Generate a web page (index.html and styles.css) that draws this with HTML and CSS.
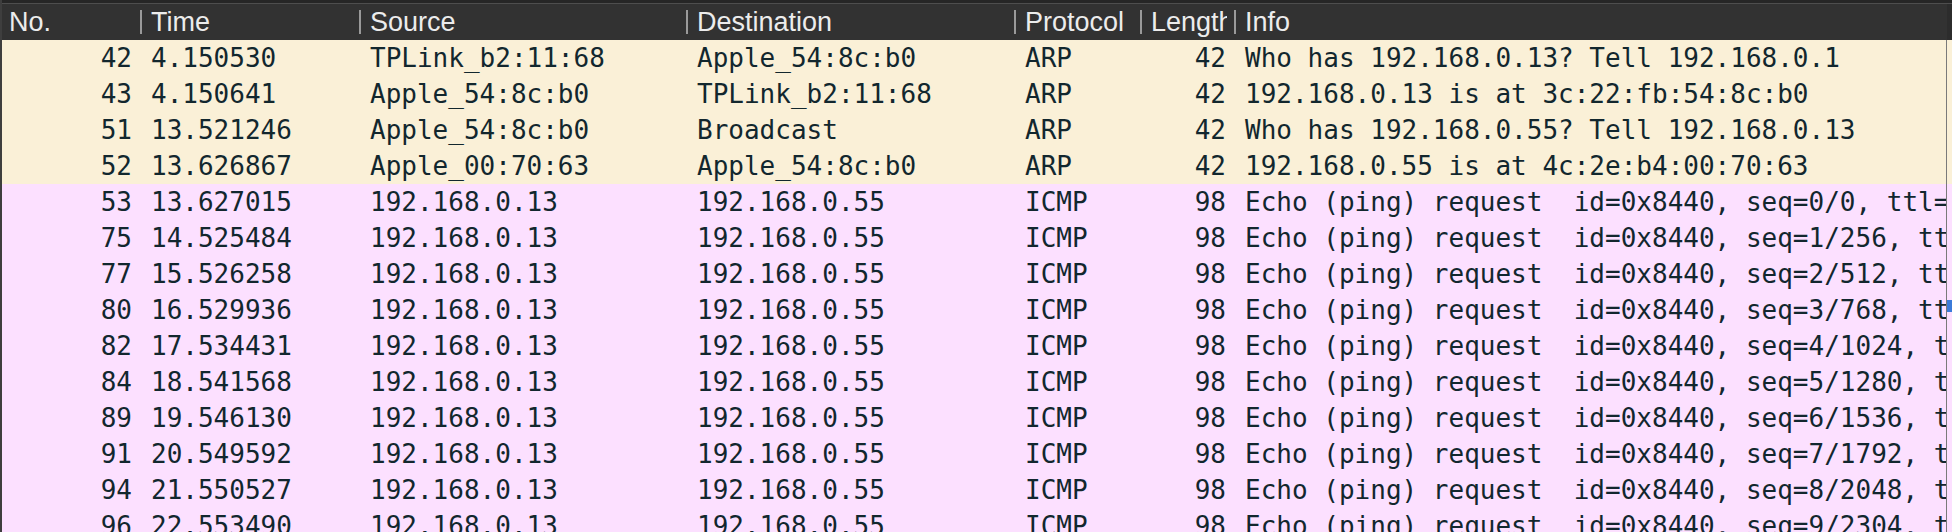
FILE: index.html
```html
<!DOCTYPE html>
<html>
<head>
<meta charset="utf-8">
<link rel="stylesheet" href="styles.css">
</head>
<body>
<div class="pane">
  <div class="topband"></div>
  <div class="row head">
    <div class="hcell first"><span class="lbl">No.</span></div>
    <div class="hcell"><span class="lbl">Time</span></div>
    <div class="hcell"><span class="lbl">Source</span></div>
    <div class="hcell"><span class="lbl">Destination</span></div>
    <div class="hcell"><span class="lbl">Protocol</span></div>
    <div class="hcell"><span class="lbl">Length</span></div>
    <div class="hcell info"><span class="lbl">Info</span></div>
    <div class="gutter"></div>
  </div>

  <div class="row arp"><div class="c num">42</div><div class="c">4.150530</div><div class="c">TPLink_b2:11:68</div><div class="c">Apple_54:8c:b0</div><div class="c">ARP</div><div class="c num">42</div><div class="c info">Who has 192.168.0.13? Tell 192.168.0.1</div><div class="gutter"></div></div>
  <div class="row arp"><div class="c num">43</div><div class="c">4.150641</div><div class="c">Apple_54:8c:b0</div><div class="c">TPLink_b2:11:68</div><div class="c">ARP</div><div class="c num">42</div><div class="c info">192.168.0.13 is at 3c:22:fb:54:8c:b0</div><div class="gutter"></div></div>
  <div class="row arp"><div class="c num">51</div><div class="c">13.521246</div><div class="c">Apple_54:8c:b0</div><div class="c">Broadcast</div><div class="c">ARP</div><div class="c num">42</div><div class="c info">Who has 192.168.0.55? Tell 192.168.0.13</div><div class="gutter"></div></div>
  <div class="row arp"><div class="c num">52</div><div class="c">13.626867</div><div class="c">Apple_00:70:63</div><div class="c">Apple_54:8c:b0</div><div class="c">ARP</div><div class="c num">42</div><div class="c info">192.168.0.55 is at 4c:2e:b4:00:70:63</div><div class="gutter"></div></div>

  <div class="row icmp"><div class="c num">53</div><div class="c">13.627015</div><div class="c">192.168.0.13</div><div class="c">192.168.0.55</div><div class="c">ICMP</div><div class="c num">98</div><div class="c info">Echo (ping) request  id=0x8440, seq=0/0, ttl=64 (reply in 54)</div><div class="gutter"></div></div>
  <div class="row icmp"><div class="c num">75</div><div class="c">14.525484</div><div class="c">192.168.0.13</div><div class="c">192.168.0.55</div><div class="c">ICMP</div><div class="c num">98</div><div class="c info">Echo (ping) request  id=0x8440, seq=1/256, ttl=64 (reply in 76)</div><div class="gutter"></div></div>
  <div class="row icmp"><div class="c num">77</div><div class="c">15.526258</div><div class="c">192.168.0.13</div><div class="c">192.168.0.55</div><div class="c">ICMP</div><div class="c num">98</div><div class="c info">Echo (ping) request  id=0x8440, seq=2/512, ttl=64 (reply in 78)</div><div class="gutter"></div></div>
  <div class="row icmp"><div class="c num">80</div><div class="c">16.529936</div><div class="c">192.168.0.13</div><div class="c">192.168.0.55</div><div class="c">ICMP</div><div class="c num">98</div><div class="c info">Echo (ping) request  id=0x8440, seq=3/768, ttl=64 (reply in 81)</div><div class="gutter mark"></div></div>
  <div class="row icmp"><div class="c num">82</div><div class="c">17.534431</div><div class="c">192.168.0.13</div><div class="c">192.168.0.55</div><div class="c">ICMP</div><div class="c num">98</div><div class="c info">Echo (ping) request  id=0x8440, seq=4/1024, ttl=64 (reply in 83)</div><div class="gutter"></div></div>
  <div class="row icmp"><div class="c num">84</div><div class="c">18.541568</div><div class="c">192.168.0.13</div><div class="c">192.168.0.55</div><div class="c">ICMP</div><div class="c num">98</div><div class="c info">Echo (ping) request  id=0x8440, seq=5/1280, ttl=64 (reply in 85)</div><div class="gutter"></div></div>
  <div class="row icmp"><div class="c num">89</div><div class="c">19.546130</div><div class="c">192.168.0.13</div><div class="c">192.168.0.55</div><div class="c">ICMP</div><div class="c num">98</div><div class="c info">Echo (ping) request  id=0x8440, seq=6/1536, ttl=64 (reply in 90)</div><div class="gutter"></div></div>
  <div class="row icmp"><div class="c num">91</div><div class="c">20.549592</div><div class="c">192.168.0.13</div><div class="c">192.168.0.55</div><div class="c">ICMP</div><div class="c num">98</div><div class="c info">Echo (ping) request  id=0x8440, seq=7/1792, ttl=64 (reply in 92)</div><div class="gutter"></div></div>
  <div class="row icmp"><div class="c num">94</div><div class="c">21.550527</div><div class="c">192.168.0.13</div><div class="c">192.168.0.55</div><div class="c">ICMP</div><div class="c num">98</div><div class="c info">Echo (ping) request  id=0x8440, seq=8/2048, ttl=64 (reply in 95)</div><div class="gutter"></div></div>
  <div class="row icmp"><div class="c num">96</div><div class="c">22.553490</div><div class="c">192.168.0.13</div><div class="c">192.168.0.55</div><div class="c">ICMP</div><div class="c num">98</div><div class="c info">Echo (ping) request  id=0x8440, seq=9/2304, ttl=64 (reply in 97)</div><div class="gutter"></div></div>
</div>
</body>
</html>
```

FILE: styles.css
```css
html, body {
  margin: 0;
  padding: 0;
  width: 1952px;
  height: 532px;
  overflow: hidden;
  background: #2b2b2b;
}

.pane {
  border-left: 2px solid #3e3e3e;
  display: flex;
  flex-direction: column;
}

.topband {
  height: 3px;
  background: #262626;
  border-bottom: 1px solid #4e4e4e;
}

.row {
  display: grid;
  grid-template-columns: 138px 219px 327px 328px 126px 94px 1fr 5px;
  height: 36px;
}

.head {
  background: #323232;
  align-items: center;
}

.hcell {
  height: 24px;
  padding: 0 7px 0 9px;
  border-left: 2px solid #9a9a9a;
  font-family: "Liberation Sans", Arial, sans-serif;
  font-size: 27px;
  line-height: 24px;
  color: #ececec;
  min-width: 0;
}

.hcell.first {
  border-left: none;
  padding-left: 7px;
}

.lbl {
  display: block;
  white-space: nowrap;
  clip-path: inset(-12px 0 -12px 0);
}

.head .gutter {
  align-self: stretch;
  background: #2c2c2c;
}

.arp { background: #faf0d7; }
.icmp { background: #fce0ff; }

.c {
  font-family: "DejaVu Sans Mono", Menlo, monospace;
  font-size: 26px;
  line-height: 36px;
  color: #12272e;
  padding: 0 8px 0 11px;
  white-space: pre;
  overflow: hidden;
  min-width: 0;
}

.c.num {
  text-align: right;
  padding-left: 0;
}

.c.info {
  padding-right: 0;
  border-right: 1px solid #7a7a7a;
}

.gutter.mark {
  background: linear-gradient(#fce0ff 0 8px, #3b7bd9 8px 20px, #fce0ff 20px);
}
```
